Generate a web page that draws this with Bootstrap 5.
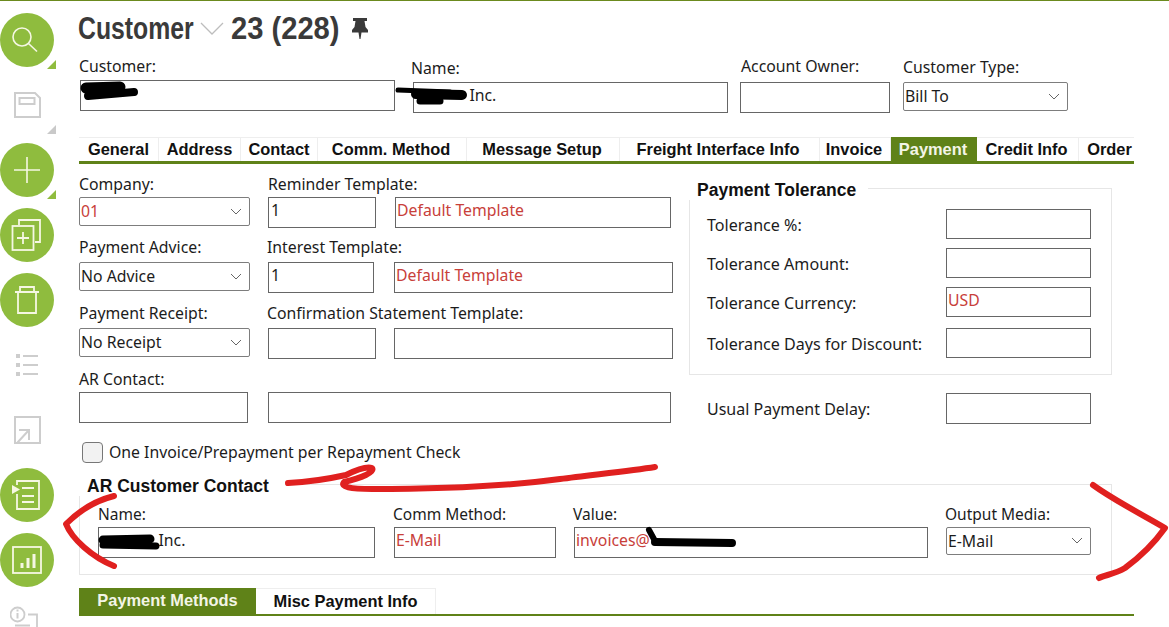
<!DOCTYPE html>
<html lang="en">
<head>
<meta charset="utf-8">
<title>Customer</title>
<link href="https://cdn.jsdelivr.net/npm/bootstrap@5.3.0/dist/css/bootstrap.min.css" rel="stylesheet">
<style>
html,body{height:627px;overflow:hidden;background:#fff}
body{font-family:"Noto Sans","Liberation Sans",sans-serif;font-size:15.8px;color:#1c1c1c}
.pagewrap{height:627px;border-top:1px solid #6b8a1e;overflow:hidden}
.siderail{width:79px;flex:none;padding-top:6px}
.railslot{height:65px;width:54px;padding-top:1px;position:relative;display:flex;align-items:center;justify-content:center;flex:none}
.railcircle{width:54px;height:54px;border-radius:50%;background:#8fbc3e;display:flex;align-items:center;justify-content:center;flex:none}
.railcircle svg,.railslot>svg{display:block;flex:none}
.railtri{position:absolute;right:-2px;top:53px;width:0;height:0;border-style:solid;border-width:0 0 9px 9px;border-color:transparent transparent #8fbc3e transparent}
.railtri.offtri{border-color:transparent transparent #c9c9c9 transparent}
.mainpane{width:1055px;flex:none}
.titlerow{height:55px;color:#3a3a3a}
.titletext{display:inline-block;font-family:"Liberation Sans",sans-serif;font-weight:700;font-size:31px;line-height:36px;white-space:nowrap;transform-origin:left center}
.tt-word{width:117px;transform:scaleX(.8);margin-left:-1px}
.tt-num{width:108px;transform:scaleX(.94);margin-left:7px}
.titlechev{margin-left:5px}
.form-control.boxin,.form-select.boxsel{border-radius:0;border:1px solid #666;padding:0 2px 5px;font-size:15.8px;color:#1c1c1c;height:31px;box-shadow:none;font-family:inherit}
.form-control.redtext{color:#c8403a;padding-left:1px}
.form-select.boxsel{height:29px;border-color:#7d7d7d;border-radius:2px;padding:1px 22px 0 1px;background-position:right 7px center;background-size:12px 8px;background-image:url("data:image/svg+xml,%3csvg xmlns='http://www.w3.org/2000/svg' viewBox='0 0 12 8'%3e%3cpath fill='none' stroke='%23666' d='M1 1l5 5 5-5'/%3e%3c/svg%3e")}
.form-select.redtext{color:#c8403a}
.fld-lbl{line-height:20px;margin-bottom:3px;white-space:nowrap}
.lbl4{margin-bottom:4px}
.lbl5{margin-bottom:5px}
.lbl6{margin-bottom:6px}
.outset2{margin-left:-2px}
.outset1{margin-left:-1px}
.inset1{margin-left:1px}
.headrow{height:81px}
.w315{width:315px}.w316{width:316px}.w150{width:150px}.w165{width:165px}.w171{width:171px}.w169{width:169px}
.w108{width:108px}.w106{width:106px}.w276{width:276px}.w279{width:279px}.w277{width:277px}.w403{width:403px}
.w162{width:162px}.w354{width:354px}.w145{width:145px}
.gap18{margin-left:18px}.gap19{margin-left:19px}.gap20{margin-left:20px}.gap12{margin-left:12px}.gap13{margin-left:13px}
.nudge2{padding-top:2px}.nudge1{padding-top:1px}
.tabstrip{height:27px;border-top:1px solid #eee;border-bottom:3px solid #5f8218;font-weight:700;font-family:"Liberation Sans",sans-serif;font-size:16.4px;color:#111;line-height:23px}
.tabcell{text-align:center;border-right:1px solid #eee;white-space:nowrap;flex:none;color:#111}
.tabcell.onstate{background:#5f8218;color:#f3f5e6;border-right:0;margin-top:-1px;padding-top:1px;height:24px}
.shl2{padding-right:2px}.shl3{padding-right:3px}
.tw80{width:80px}.tw82{width:82px}.tw77{width:77px}.tw149{width:149px}.tw153{width:153px}.tw200{width:200px}.tw71{width:71px}.tw86{width:86px}.tw102{width:102px}.tw55{width:55px;border-right:0;padding-left:6px}
.formcols{height:320px}
.leftcol{width:610px;flex:none;padding-top:10px}
.rowgap9{margin-top:9px}.rowgap10{margin-top:10px}
.checkline{margin-top:19px;margin-left:3px;height:20px}
.form-check-input.roundbox{width:21px;height:21px;margin:0;border-radius:4px;border:1px solid #777;background-color:#f2f2f2;flex:none}
.checktext{margin-left:6px;line-height:20px;white-space:nowrap}
.rightcol{width:423px;flex:none;padding-top:24px}
.groupbox{border:1px solid #e6e6e6;padding:0 20px 15px 17px;height:187px}
.grouptitle{font-family:"Liberation Sans",sans-serif;font-weight:700;font-size:17.5px;line-height:20px;color:#111;background:#fff;width:fit-content;white-space:nowrap}
.tolhead{margin:-9px 0 0 -18px;padding:0 12px 0 8px}
.tolrow{height:30px;margin-top:9px;align-items:center;justify-content:space-between;font-size:16.1px}
.tolrow>span{padding-top:3px}
.tolrow .form-control.boxin{height:30px}
.tolfirst{margin-top:9px}
.tollast{margin-top:11px}
.usualrow{margin:18px 21px 0 18px;height:31px;align-items:center;justify-content:space-between;font-size:16px}
.contactbox{width:1033px;height:91px;border:1px solid #e6e6e6;padding:0 20px 0 18px}
.conhead{margin:-9px 0 0 -19px;padding:0 16px 0 8px}
.conrow{margin-top:8px}
.conrow .fld-lbl{font-size:15.5px}
.conrow .form-select.boxsel{height:28px}
.subtabs{height:28px;margin-top:13px;border-bottom:2px solid #5f8218;font-family:"Liberation Sans",sans-serif;font-weight:700;font-size:16.4px;line-height:25px;color:#111}
.subcell{text-align:center;flex:none}
.subcell.onstate{width:177px;background:#5f8218;color:#f3f5e6;height:26px}
.subcell.offstate{width:180px;border:1px solid #eee;border-bottom:0;border-left:0;height:26px}
.scribble{position:absolute;left:0;top:0;width:1169px;height:627px;pointer-events:none}
</style>
</head>
<body>
<div class="pagewrap position-relative d-flex">
  <aside class="siderail d-flex flex-column">
    <div class="railslot"><div class="railcircle"><svg width="40" height="40" viewBox="0 0 40 40" fill="none" stroke="#f5f7e3" stroke-width="1.6"><circle cx="15" cy="17" r="9"/><path d="M21.500 23.500l8.500 8"/></svg></div><span class="railtri"></span></div>
    <div class="railslot"><svg width="27" height="26" viewBox="0 0 27 26" fill="none" stroke="#cdcdcd" stroke-width="2"><path d="M1 1h20l5 5v19H1z"/><rect x="5.500" y="6" width="15" height="6"/></svg><span class="railtri offtri"></span></div>
    <div class="railslot"><div class="railcircle"><svg width="40" height="40" viewBox="0 0 40 40" fill="none" stroke="#f5f7e3" stroke-width="1.6"><path d="M20 7v26M7 20h26"/></svg></div><span class="railtri"></span></div>
    <div class="railslot"><div class="railcircle"><svg width="32" height="32" viewBox="0 0 32 32" fill="none" stroke="#f5f7e3" stroke-width="1.800"><path d="M8 6V1h21v22h-5"/><rect x="1.500" y="7" width="21" height="24"/><path d="M12 13v12M6 19h12"/></svg></div></div>
    <div class="railslot"><div class="railcircle"><svg width="24" height="28" viewBox="0 0 24 28" fill="none" stroke="#f5f7e3" stroke-width="1.800"><path d="M0 6h24M3 6v21h18V6M5 6V1h14v5"/></svg></div></div>
    <div class="railslot"><svg width="24" height="24" viewBox="0 0 24 24" fill="#cdcdcd"><rect x="1" y="1" width="4" height="4"/><rect x="1" y="10" width="4" height="4"/><rect x="1" y="19" width="4" height="4"/><rect x="8" y="2" width="15" height="2"/><rect x="8" y="11" width="15" height="2"/><rect x="8" y="20" width="15" height="2"/></svg></div>
    <div class="railslot"><svg width="27" height="28" viewBox="0 0 27 28" fill="none" stroke="#cdcdcd" stroke-width="2"><rect x="1" y="1" width="25" height="26"/><path d="M3.500 26.500L15 14M5 14h10v10"/></svg></div>
    <div class="railslot"><div class="railcircle"><svg width="30" height="30" viewBox="0 0 30 30" fill="none" stroke="#f5f7e3" stroke-width="1.800"><path d="M5 5V1h22v28H5V14"/><path d="M10 8h12M10 16h12M10 22h12" stroke-width="2"/><path d="M0 5l8 4.500L0 14z" fill="#f5f7e3" stroke="none"/></svg></div></div>
    <div class="railslot"><div class="railcircle"><svg width="30" height="28" viewBox="0 0 30 28" fill="none" stroke="#f5f7e3" stroke-width="1.800"><rect x="1" y="1" width="28" height="26"/><path d="M10 22v-5M16 22V12M22 22V8" stroke-width="3"/></svg></div></div>
    <div class="railslot"><svg width="34" height="44" viewBox="0 0 34 44" fill="none" stroke="#cdcdcd" stroke-width="1.800"><circle cx="7.500" cy="11.500" r="7"/><path d="M7.500 10v5.500M7.500 6.500v2" stroke-width="2"/><path d="M18 11.500h9V26M5 22.500h15"/></svg></div>
  </aside>
  <main class="mainpane">
    <div class="titlerow d-flex align-items-center">
      <span class="titletext tt-word">Customer</span>
      <svg class="titlechev" width="24" height="14" viewBox="0 0 24 14" fill="none" stroke="#bdbdbd" stroke-width="1.300"><path d="M1 1l11 11L23 1"/></svg>
      <span class="titletext tt-num">23 (228)</span>
      <svg class="gap13" width="16" height="21" viewBox="0 0 16 21" fill="#3a3a3a"><path d="M1 0h14v3h-2.500l1 6 2.500 3v2.500H9.500L8.500 21h-1l-1-6.500H0V12l2.500-3 1-6H1z"/></svg>
    </div>
    <div class="headrow d-flex">
      <div class="w316"><div class="fld-lbl lbl4">Customer:</div><input class="form-control boxin inset1 w315" type="text" aria-label="Customer"></div>
      <div class="gap18 w315 nudge2"><div class="fld-lbl lbl4 outset2">Name:</div><input class="form-control boxin" type="text" value="             Inc." aria-label="Name"></div>
      <div class="gap12 w150"><div class="fld-lbl lbl6 inset1">Account Owner:</div><input class="form-control boxin" type="text" aria-label="Account Owner"></div>
      <div class="gap13 w165 nudge1"><div class="fld-lbl lbl5">Customer Type:</div><select class="form-select boxsel" aria-label="Customer Type"><option>Bill To</option></select></div>
    </div>
    <div class="tabstrip d-flex">
      <span class="tabcell tw80">General</span><span class="tabcell tw82">Address</span><span class="tabcell tw77">Contact</span><span class="tabcell tw149 shl2">Comm. Method</span><span class="tabcell tw153 shl2">Message Setup</span><span class="tabcell tw200 shl3">Freight Interface Info</span><span class="tabcell tw71 shl2">Invoice</span><span class="tabcell tw86 onstate shl2">Payment</span><span class="tabcell tw102 shl2">Credit Info</span><span class="tabcell tw55">Order</span>
    </div>
    <div class="formcols d-flex">
      <div class="leftcol">
        <div class="d-flex">
          <div class="w171"><div class="fld-lbl">Company:</div><select class="form-select boxsel redtext" aria-label="Company"><option>01</option></select></div>
          <div class="gap18 w108"><div class="fld-lbl">Reminder Template:</div><input class="form-control boxin" type="text" value="1" aria-label="Reminder Template"></div>
          <div class="gap19 w276 align-self-end"><input class="form-control boxin redtext" type="text" value="Default Template" aria-label="Reminder description"></div>
        </div>
        <div class="d-flex rowgap9">
          <div class="w171"><div class="fld-lbl lbl5">Payment Advice:</div><select class="form-select boxsel" aria-label="Payment Advice"><option>No Advice</option></select></div>
          <div class="gap18 w106"><div class="fld-lbl lbl5 outset1">Interest Template:</div><input class="form-control boxin" type="text" value="1" aria-label="Interest Template"></div>
          <div class="gap20 w279 align-self-end"><input class="form-control boxin redtext" type="text" value="Default Template" aria-label="Interest description"></div>
        </div>
        <div class="d-flex rowgap10">
          <div class="w171"><div class="fld-lbl lbl5">Payment Receipt:</div><select class="form-select boxsel" aria-label="Payment Receipt"><option>No Receipt</option></select></div>
          <div class="gap18 w108"><div class="fld-lbl lbl5 outset1">Confirmation Statement Template:</div><input class="form-control boxin" type="text" aria-label="Confirmation Statement Template"></div>
          <div class="gap18 w279 align-self-end"><input class="form-control boxin" type="text" aria-label="Confirmation description"></div>
        </div>
        <div class="d-flex rowgap10">
          <div class="w169"><div class="fld-lbl">AR Contact:</div><input class="form-control boxin" type="text" aria-label="AR Contact"></div>
          <div class="gap20 w403 align-self-end"><input class="form-control boxin" type="text" aria-label="AR Contact name"></div>
        </div>
        <div class="checkline d-flex align-items-center">
          <input class="form-check-input roundbox" type="checkbox" id="oneinv">
          <label class="checktext" for="oneinv">One Invoice/Prepayment per Repayment Check</label>
        </div>
      </div>
      <div class="rightcol">
        <div class="groupbox">
          <div class="grouptitle tolhead">Payment Tolerance</div>
          <div class="d-flex tolrow tolfirst"><span>Tolerance %:</span><input class="form-control boxin w145" type="text" aria-label="Tolerance %"></div>
          <div class="d-flex tolrow"><span>Tolerance Amount:</span><input class="form-control boxin w145" type="text" aria-label="Tolerance Amount"></div>
          <div class="d-flex tolrow"><span>Tolerance Currency:</span><input class="form-control boxin redtext w145" type="text" value="USD" aria-label="Tolerance Currency"></div>
          <div class="d-flex tolrow tollast"><span>Tolerance Days for Discount:</span><input class="form-control boxin w145" type="text" aria-label="Tolerance Days for Discount"></div>
        </div>
        <div class="d-flex usualrow"><span>Usual Payment Delay:</span><input class="form-control boxin w145" type="text" aria-label="Usual Payment Delay"></div>
      </div>
    </div>
    <div class="contactbox">
      <div class="grouptitle conhead">AR Customer Contact</div>
      <div class="d-flex conrow">
        <div class="w277"><div class="fld-lbl">Name:</div><input class="form-control boxin" type="text" value="              Inc." aria-label="Contact name"></div>
        <div class="gap19 w162"><div class="fld-lbl outset1">Comm Method:</div><input class="form-control boxin redtext" type="text" value="E-Mail" aria-label="Comm Method"></div>
        <div class="gap18 w354"><div class="fld-lbl outset1">Value:</div><input class="form-control boxin redtext" type="text" value="invoices@" aria-label="Value"></div>
        <div class="gap18 w145"><div class="fld-lbl outset1">Output Media:</div><select class="form-select boxsel" aria-label="Output Media"><option>E-Mail</option></select></div>
      </div>
    </div>
    <div class="subtabs d-flex">
      <span class="subcell onstate">Payment Methods</span><span class="subcell offstate">Misc Payment Info</span>
    </div>
  </main>
  <svg class="scribble" viewBox="0 0 1169 627" fill="none" stroke-linecap="round" stroke-linejoin="round" aria-hidden="true">
    <g stroke="#e0201f" stroke-width="6">
      <path d="M288 482C310 481 328 478 346 474C356 469 366 465 372 467C375 471 362 477 344 481C340 486 350 488 372 488C430 488 500 486 560 478C590 474 630 470 655 466"/>
      <path d="M114 495C98 499 80 509 66 523C72 538 92 556 114 565"/>
      <path d="M1093 484C1115 500 1145 515 1165 527C1155 541 1140 556 1125 567C1115 573 1105 574 1099 577"/>
    </g>
    <g stroke="#000" stroke-linecap="round">
      <path d="M86 87L120 86" stroke-width="11"/><path d="M88 95L134 91" stroke-width="8"/>
      <path d="M398 89L450 91" stroke-width="5"/><path d="M416 93L462 94" stroke-width="10"/><path d="M420 100L440 100" stroke-width="7"/>
      <path d="M103 539L150 538" stroke-width="9"/><path d="M103 544L156 545" stroke-width="7"/>
      <path d="M649 529L655 540" stroke-width="6"/><path d="M655 541L732 542" stroke-width="8"/>
    </g>
  </svg>
</div>
</body>
</html>
